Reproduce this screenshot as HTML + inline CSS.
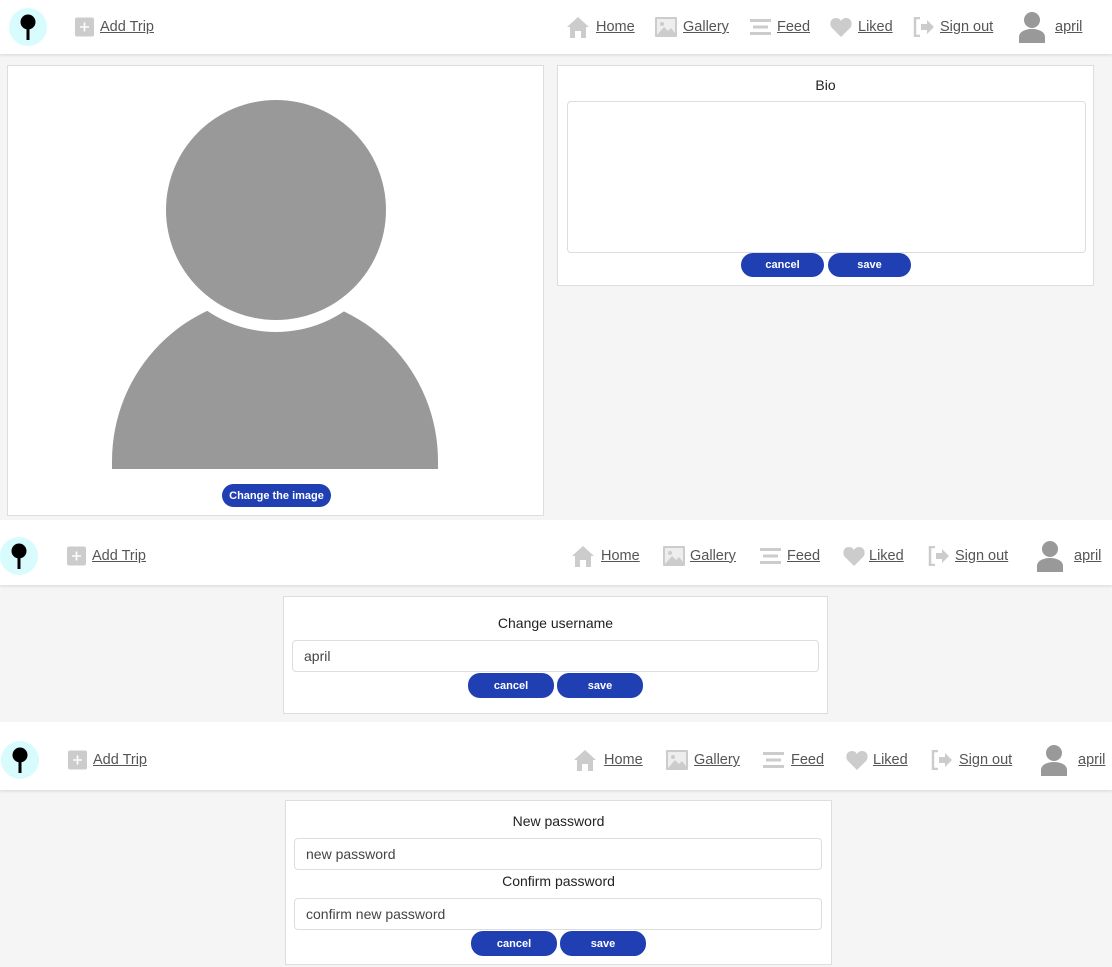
<!DOCTYPE html>
<html><head><meta charset="utf-8"><style>
*{box-sizing:border-box;margin:0;padding:0}
body{width:1112px;height:967px;background:#f5f5f5;position:relative;overflow:hidden;font-family:"Liberation Sans",sans-serif;color:#333}
.nav{position:absolute;left:0;width:1112px;background:#fff;box-shadow:0 2px 2px rgba(0,0,0,.08);--o:0px}
.nav>*{position:absolute}
.lnk{font-size:14.5px;color:#555;text-decoration:underline;top:calc(50% + var(--o));transform:translateY(-50%)}
.logo{width:38px;height:38px;border-radius:50%;background:#d8fbfd;top:calc(50% + var(--o));margin-top:-19px}
.ic{top:calc(50% + var(--o));transform:translateY(-50%)}
.card{position:absolute;background:#fff;border:1px solid #ddd}
.t{position:absolute;left:0;right:0;text-align:center;font-size:14px;color:#222}
.inp{position:absolute;border:1px solid #ddd;border-radius:4px;background:#fff;font-size:14px;color:#444;padding-left:11px;display:flex;align-items:center}
.btn{position:absolute;background:#1f3fb2;color:#fff;border-radius:12px;font-size:11px;font-weight:bold;display:flex;align-items:center;justify-content:center}
</style></head><body>

<!-- NAV 1 -->
<div class="nav" style="top:0;height:54px">
 <div class="logo" style="left:9px"><svg width="38" height="38"><circle cx="19" cy="14" r="7.5" fill="#000"/><rect x="17.5" y="18" width="3" height="14" fill="#000"/></svg></div>
 <svg class="ic" style="left:75px" width="19" height="19"><rect width="19" height="19" rx="2" fill="#ccc"/><path d="M9.5 5v9M5 9.5h9" stroke="#fff" stroke-width="1.6"/></svg>
 <span class="lnk" style="left:100px">Add Trip</span>
 <svg class="ic" style="left:566px" width="24" height="22"><path d="M1 11L12 1L23 11H20V22H15V15H9V22H4V11Z" fill="#ccc"/></svg>
 <span class="lnk" style="left:596px">Home</span>
 <svg class="ic" style="left:655px" width="22" height="20"><rect width="22" height="20" rx="1" fill="#ccc"/><rect x="2" y="2" width="18" height="16" fill="#eee"/><circle cx="7" cy="7" r="2" fill="#ccc"/><path d="M2 18L9 10L13 14L16 11L20 16V18Z" fill="#ccc"/></svg>
 <span class="lnk" style="left:683px">Gallery</span>
 <svg class="ic" style="left:750px" width="21" height="17"><path d="M0 2H21M3 8.5H18M0 15H21" stroke="#ccc" stroke-width="3"/></svg>
 <span class="lnk" style="left:777px">Feed</span>
 <svg class="ic" style="left:830px" width="22" height="20"><path d="M11 20L2 11C-1 8 0 1 6 1C8 1 10 2 11 4C12 2 14 1 16 1C22 1 23 8 20 11Z" fill="#ccc"/></svg>
 <span class="lnk" style="left:858px">Liked</span>
 <svg class="ic" style="left:913px" width="22" height="20"><path d="M7 1H2V19H7" fill="none" stroke="#ccc" stroke-width="2.5"/><path d="M8 7H14V3L21 10L14 17V13H8Z" fill="#ccc"/></svg>
 <span class="lnk" style="left:940px">Sign out</span>
 <svg class="ic" style="left:1018px" width="28" height="32"><circle cx="14" cy="9" r="8" fill="#999"/><path d="M1 32V26C1 21 7 18 14 18C21 18 27 21 27 26V32Z" fill="#999"/></svg>
 <span class="lnk" style="left:1055px">april</span>
</div>

<div class="card" style="left:7px;top:65px;width:537px;height:451px">
 <svg style="position:absolute;left:0;top:0" width="537" height="451"><path d="M104 403V395A163 165 0 0 1 430 395V403Z" fill="#999"/><circle cx="268" cy="144" r="122" fill="#fff"/><circle cx="268" cy="144" r="110" fill="#999"/></svg>
 <div class="btn" style="left:214px;top:418px;width:109px;height:23px">Change the image</div>
</div>
<div class="card" style="left:557px;top:65px;width:537px;height:221px">
 <div class="t" style="top:11px">Bio</div>
 <div class="inp" style="left:9px;top:35px;width:519px;height:152px"></div>
 <div class="btn" style="left:183px;top:187px;width:83px;height:24px">cancel</div>
 <div class="btn" style="left:270px;top:187px;width:83px;height:24px">save</div>
</div>

<!-- NAV 2 -->
<div class="nav" style="top:520px;height:65px;--o:3px">
 <div class="logo" style="left:0px"><svg width="38" height="38"><circle cx="19" cy="14" r="7.5" fill="#000"/><rect x="17.5" y="18" width="3" height="14" fill="#000"/></svg></div>
 <svg class="ic" style="left:67px" width="19" height="19"><rect width="19" height="19" rx="2" fill="#ccc"/><path d="M9.5 5v9M5 9.5h9" stroke="#fff" stroke-width="1.6"/></svg>
 <span class="lnk" style="left:92px">Add Trip</span>
 <svg class="ic" style="left:571px" width="24" height="22"><path d="M1 11L12 1L23 11H20V22H15V15H9V22H4V11Z" fill="#ccc"/></svg>
 <span class="lnk" style="left:601px">Home</span>
 <svg class="ic" style="left:663px" width="22" height="20"><rect width="22" height="20" rx="1" fill="#ccc"/><rect x="2" y="2" width="18" height="16" fill="#eee"/><circle cx="7" cy="7" r="2" fill="#ccc"/><path d="M2 18L9 10L13 14L16 11L20 16V18Z" fill="#ccc"/></svg>
 <span class="lnk" style="left:690px">Gallery</span>
 <svg class="ic" style="left:760px" width="21" height="17"><path d="M0 2H21M3 8.5H18M0 15H21" stroke="#ccc" stroke-width="3"/></svg>
 <span class="lnk" style="left:787px">Feed</span>
 <svg class="ic" style="left:843px" width="22" height="20"><path d="M11 20L2 11C-1 8 0 1 6 1C8 1 10 2 11 4C12 2 14 1 16 1C22 1 23 8 20 11Z" fill="#ccc"/></svg>
 <span class="lnk" style="left:869px">Liked</span>
 <svg class="ic" style="left:928px" width="22" height="20"><path d="M7 1H2V19H7" fill="none" stroke="#ccc" stroke-width="2.5"/><path d="M8 7H14V3L21 10L14 17V13H8Z" fill="#ccc"/></svg>
 <span class="lnk" style="left:955px">Sign out</span>
 <svg class="ic" style="left:1036px" width="28" height="32"><circle cx="14" cy="9" r="8" fill="#999"/><path d="M1 32V26C1 21 7 18 14 18C21 18 27 21 27 26V32Z" fill="#999"/></svg>
 <span class="lnk" style="left:1074px">april</span>
</div>

<div class="card" style="left:283px;top:596px;width:545px;height:118px">
 <div class="t" style="top:18px">Change username</div>
 <div class="inp" style="left:8px;top:43px;width:527px;height:32px">april</div>
 <div class="btn" style="left:184px;top:76px;width:86px;height:25px">cancel</div>
 <div class="btn" style="left:273px;top:76px;width:86px;height:25px">save</div>
</div>

<!-- NAV 3 -->
<div class="nav" style="top:722px;height:68px;--o:4px">
 <div class="logo" style="left:1px"><svg width="38" height="38"><circle cx="19" cy="14" r="7.5" fill="#000"/><rect x="17.5" y="18" width="3" height="14" fill="#000"/></svg></div>
 <svg class="ic" style="left:68px" width="19" height="19"><rect width="19" height="19" rx="2" fill="#ccc"/><path d="M9.5 5v9M5 9.5h9" stroke="#fff" stroke-width="1.6"/></svg>
 <span class="lnk" style="left:93px">Add Trip</span>
 <svg class="ic" style="left:573px" width="24" height="22"><path d="M1 11L12 1L23 11H20V22H15V15H9V22H4V11Z" fill="#ccc"/></svg>
 <span class="lnk" style="left:604px">Home</span>
 <svg class="ic" style="left:666px" width="22" height="20"><rect width="22" height="20" rx="1" fill="#ccc"/><rect x="2" y="2" width="18" height="16" fill="#eee"/><circle cx="7" cy="7" r="2" fill="#ccc"/><path d="M2 18L9 10L13 14L16 11L20 16V18Z" fill="#ccc"/></svg>
 <span class="lnk" style="left:694px">Gallery</span>
 <svg class="ic" style="left:763px" width="21" height="17"><path d="M0 2H21M3 8.5H18M0 15H21" stroke="#ccc" stroke-width="3"/></svg>
 <span class="lnk" style="left:791px">Feed</span>
 <svg class="ic" style="left:846px" width="22" height="20"><path d="M11 20L2 11C-1 8 0 1 6 1C8 1 10 2 11 4C12 2 14 1 16 1C22 1 23 8 20 11Z" fill="#ccc"/></svg>
 <span class="lnk" style="left:873px">Liked</span>
 <svg class="ic" style="left:931px" width="22" height="20"><path d="M7 1H2V19H7" fill="none" stroke="#ccc" stroke-width="2.5"/><path d="M8 7H14V3L21 10L14 17V13H8Z" fill="#ccc"/></svg>
 <span class="lnk" style="left:959px">Sign out</span>
 <svg class="ic" style="left:1040px" width="28" height="32"><circle cx="14" cy="9" r="8" fill="#999"/><path d="M1 32V26C1 21 7 18 14 18C21 18 27 21 27 26V32Z" fill="#999"/></svg>
 <span class="lnk" style="left:1078px">april</span>
</div>

<div class="card" style="left:285px;top:800px;width:547px;height:165px">
 <div class="t" style="top:12px">New password</div>
 <div class="inp" style="left:8px;top:37px;width:528px;height:32px">new password</div>
 <div class="t" style="top:72px">Confirm password</div>
 <div class="inp" style="left:8px;top:97px;width:528px;height:32px">confirm new password</div>
 <div class="btn" style="left:185px;top:130px;width:86px;height:25px">cancel</div>
 <div class="btn" style="left:274px;top:130px;width:86px;height:25px">save</div>
</div>
</body></html>
